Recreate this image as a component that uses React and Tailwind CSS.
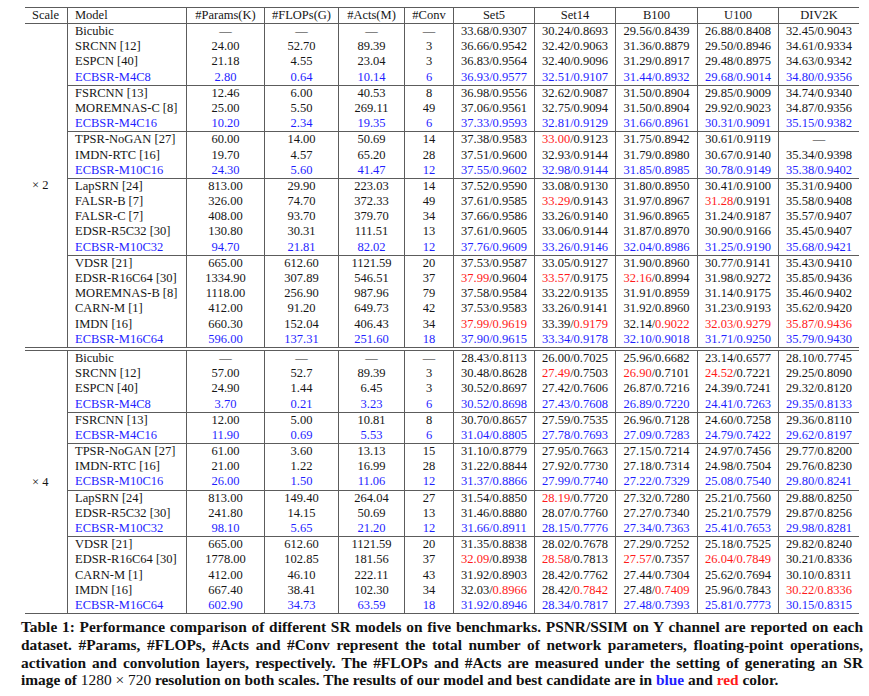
import React from 'react'

const W = ['w-[119px]', 'w-[78px]', 'w-[74px]', 'w-[66px]', 'w-[49px]', 'w-[81px]', 'w-[81px]', 'w-[82px]', 'w-[81px]', 'w-[81px]']
const HEAD = ['Model', '#Params(K)', '#FLOPs(G)', '#Acts(M)', '#Conv', 'Set5', 'Set14', 'B100', 'U100', 'DIV2K']
const D = '—'

// a trailing * marks a value printed in red; rows whose name starts with ECBSR are ours (blue)
const X2 = [
  [
    ['Bicubic', D, D, D, D, '33.68/0.9307', '30.24/0.8693', '29.56/0.8439', '26.88/0.8408', '32.45/0.9043'],
    ['SRCNN [12]', '24.00', '52.70', '89.39', '3', '36.66/0.9542', '32.42/0.9063', '31.36/0.8879', '29.50/0.8946', '34.61/0.9334'],
    ['ESPCN [40]', '21.18', '4.55', '23.04', '3', '36.83/0.9564', '32.40/0.9096', '31.29/0.8917', '29.48/0.8975', '34.63/0.9342'],
    ['ECBSR-M4C8', '2.80', '0.64', '10.14', '6', '36.93/0.9577', '32.51/0.9107', '31.44/0.8932', '29.68/0.9014', '34.80/0.9356'],
  ],
  [
    ['FSRCNN [13]', '12.46', '6.00', '40.53', '8', '36.98/0.9556', '32.62/0.9087', '31.50/0.8904', '29.85/0.9009', '34.74/0.9340'],
    ['MOREMNAS-C [8]', '25.00', '5.50', '269.11', '49', '37.06/0.9561', '32.75/0.9094', '31.50/0.8904', '29.92/0.9023', '34.87/0.9356'],
    ['ECBSR-M4C16', '10.20', '2.34', '19.35', '6', '37.33/0.9593', '32.81/0.9129', '31.66/0.8961', '30.31/0.9091', '35.15/0.9382'],
  ],
  [
    ['TPSR-NoGAN [27]', '60.00', '14.00', '50.69', '14', '37.38/0.9583', '33.00*/0.9123', '31.75/0.8942', '30.61/0.9119', D],
    ['IMDN-RTC [16]', '19.70', '4.57', '65.20', '28', '37.51/0.9600', '32.93/0.9144', '31.79/0.8980', '30.67/0.9140', '35.34/0.9398'],
    ['ECBSR-M10C16', '24.30', '5.60', '41.47', '12', '37.55/0.9602', '32.98/0.9144', '31.85/0.8985', '30.78/0.9149', '35.38/0.9402'],
  ],
  [
    ['LapSRN [24]', '813.00', '29.90', '223.03', '14', '37.52/0.9590', '33.08/0.9130', '31.80/0.8950', '30.41/0.9100', '35.31/0.9400'],
    ['FALSR-B [7]', '326.00', '74.70', '372.33', '49', '37.61/0.9585', '33.29*/0.9143', '31.97/0.8967', '31.28*/0.9191', '35.58/0.9408'],
    ['FALSR-C [7]', '408.00', '93.70', '379.70', '34', '37.66/0.9586', '33.26/0.9140', '31.96/0.8965', '31.24/0.9187', '35.57/0.9407'],
    ['EDSR-R5C32 [30]', '130.80', '30.31', '111.51', '13', '37.61/0.9605', '33.06/0.9144', '31.87/0.8970', '30.90/0.9166', '35.45/0.9407'],
    ['ECBSR-M10C32', '94.70', '21.81', '82.02', '12', '37.76/0.9609', '33.26/0.9146', '32.04/0.8986', '31.25/0.9190', '35.68/0.9421'],
  ],
  [
    ['VDSR [21]', '665.00', '612.60', '1121.59', '20', '37.53/0.9587', '33.05/0.9127', '31.90/0.8960', '30.77/0.9141', '35.43/0.9410'],
    ['EDSR-R16C64 [30]', '1334.90', '307.89', '546.51', '37', '37.99*/0.9604', '33.57*/0.9175', '32.16*/0.8994', '31.98/0.9272', '35.85/0.9436'],
    ['MOREMNAS-B [8]', '1118.00', '256.90', '987.96', '79', '37.58/0.9584', '33.22/0.9135', '31.91/0.8959', '31.14/0.9175', '35.46/0.9402'],
    ['CARN-M [1]', '412.00', '91.20', '649.73', '42', '37.53/0.9583', '33.26/0.9141', '31.92/0.8960', '31.23/0.9193', '35.62/0.9420'],
    ['IMDN [16]', '660.30', '152.04', '406.43', '34', '37.99*/0.9619*', '33.39/0.9179*', '32.14/0.9022*', '32.03*/0.9279*', '35.87*/0.9436*'],
    ['ECBSR-M16C64', '596.00', '137.31', '251.60', '18', '37.90/0.9615', '33.34/0.9178', '32.10/0.9018', '31.71/0.9250', '35.79/0.9430'],
  ],
]

const X4 = [
  [
    ['Bicubic', D, D, D, D, '28.43/0.8113', '26.00/0.7025', '25.96/0.6682', '23.14/0.6577', '28.10/0.7745'],
    ['SRCNN [12]', '57.00', '52.7', '89.39', '3', '30.48/0.8628', '27.49*/0.7503', '26.90*/0.7101', '24.52*/0.7221', '29.25/0.8090'],
    ['ESPCN [40]', '24.90', '1.44', '6.45', '3', '30.52/0.8697', '27.42/0.7606', '26.87/0.7216', '24.39/0.7241', '29.32/0.8120'],
    ['ECBSR-M4C8', '3.70', '0.21', '3.23', '6', '30.52/0.8698', '27.43/0.7608', '26.89/0.7220', '24.41/0.7263', '29.35/0.8133'],
  ],
  [
    ['FSRCNN [13]', '12.00', '5.00', '10.81', '8', '30.70/0.8657', '27.59/0.7535', '26.96/0.7128', '24.60/0.7258', '29.36/0.8110'],
    ['ECBSR-M4C16', '11.90', '0.69', '5.53', '6', '31.04/0.8805', '27.78/0.7693', '27.09/0.7283', '24.79/0.7422', '29.62/0.8197'],
  ],
  [
    ['TPSR-NoGAN [27]', '61.00', '3.60', '13.13', '15', '31.10/0.8779', '27.95/0.7663', '27.15/0.7214', '24.97/0.7456', '29.77/0.8200'],
    ['IMDN-RTC [16]', '21.00', '1.22', '16.99', '28', '31.22/0.8844', '27.92/0.7730', '27.18/0.7314', '24.98/0.7504', '29.76/0.8230'],
    ['ECBSR-M10C16', '26.00', '1.50', '11.06', '12', '31.37/0.8866', '27.99/0.7740', '27.22/0.7329', '25.08/0.7540', '29.80/0.8241'],
  ],
  [
    ['LapSRN [24]', '813.00', '149.40', '264.04', '27', '31.54/0.8850', '28.19*/0.7720', '27.32/0.7280', '25.21/0.7560', '29.88/0.8250'],
    ['EDSR-R5C32 [30]', '241.80', '14.15', '50.69', '13', '31.46/0.8880', '28.07/0.7760', '27.27/0.7340', '25.21/0.7579', '29.87/0.8256'],
    ['ECBSR-M10C32', '98.10', '5.65', '21.20', '12', '31.66/0.8911', '28.15/0.7776', '27.34/0.7363', '25.41/0.7653', '29.98/0.8281'],
  ],
  [
    ['VDSR [21]', '665.00', '612.60', '1121.59', '20', '31.35/0.8838', '28.02/0.7678', '27.29/0.7252', '25.18/0.7525', '29.82/0.8240'],
    ['EDSR-R16C64 [30]', '1778.00', '102.85', '181.56', '37', '32.09*/0.8938', '28.58*/0.7813', '27.57*/0.7357', '26.04*/0.7849*', '30.21/0.8336'],
    ['CARN-M [1]', '412.00', '46.10', '222.11', '43', '31.92/0.8903', '28.42/0.7762', '27.44/0.7304', '25.62/0.7694', '30.10/0.8311'],
    ['IMDN [16]', '667.40', '38.41', '102.30', '34', '32.03/0.8966*', '28.42/0.7842*', '27.48/0.7409*', '25.96/0.7843', '30.22*/0.8336*'],
    ['ECBSR-M16C64', '602.90', '34.73', '63.59', '18', '31.92/0.8946', '28.34/0.7817', '27.48/0.7393', '25.81/0.7773', '30.15/0.8315'],
  ],
]

function Score({ v }) {
  if (!v.includes('/')) return v
  const [a, b] = v.split('/')
  const ra = a.endsWith('*')
  const rb = b.endsWith('*')
  return (
    <>
      <span className={ra ? 'text-[#ff1a1a]' : ''}>{a.replace('*', '')}</span>
      <span className={ra && rb ? 'text-[#ff1a1a]' : ''}>/</span>
      <span className={rb ? 'text-[#ff1a1a]' : ''}>{b.replace('*', '')}</span>
    </>
  )
}

function Row({ cells }) {
  const ours = cells[0].startsWith('ECBSR')
  return (
    <div className={`flex h-[15.2px] leading-[15.2px] ${ours ? 'text-[#1f1fff]' : ''}`}>
      {cells.map((c, i) => (
        <div
          key={i}
          className={`${W[i]} shrink-0 border-l border-[#5c5c5c] whitespace-nowrap ${i === 0 ? 'pl-[7px]' : 'text-center'}`}
        >
          <Score v={c} />
        </div>
      ))}
    </div>
  )
}

function Section({ label, groups, className }) {
  return (
    <div className={`flex ${className}`}>
      <div className="w-[42px] shrink-0 flex items-center pl-[7px]">{label}</div>
      <div className="flex flex-col">
        {groups.map((g, gi) => (
          <div key={gi} className={gi > 0 ? 'border-t border-[#5c5c5c]' : ''}>
            {g.map((r, ri) => <Row key={ri} cells={r} />)}
          </div>
        ))}
      </div>
    </div>
  )
}

export default function App() {
  return (
    <div className="w-[869px] h-[696px] bg-white text-[#161616] font-['Liberation_Serif',serif] overflow-hidden">
      <div className="pt-[7px] pl-[25px]">
        <div className="w-[834px] text-[12.5px]">
          {/* header */}
          <div className="flex h-[17px] leading-[15px] border-t border-b border-[#5c5c5c]">
            <div className="w-[42px] shrink-0 pl-[7px]">Scale</div>
            {HEAD.map((h, i) => (
              <div key={h} className={`${W[i]} shrink-0 border-l border-[#5c5c5c] ${i === 0 ? 'pl-[7px]' : 'text-center'}`}>{h}</div>
            ))}
          </div>
          <Section label="× 2" groups={X2} className="border-b border-[#5c5c5c]" />
          <Section label="× 4" groups={X4} className="mt-[2px] border-t border-b border-[#5c5c5c]" />
        </div>
      </div>

      <div className="ml-[21px] mt-[4px] w-[842px] font-bold text-[15.4px] leading-[17.7px] text-[#111]">
        <div className="text-justify [text-align-last:justify]">
          Table 1: Performance comparison of different SR models on five benchmarks. PSNR/SSIM on Y channel are reported on each
        </div>
        <div className="text-justify [text-align-last:justify]">
          dataset. #Params, #FLOPs, #Acts and #Conv represent the total number of network parameters, floating-point operations,
        </div>
        <div className="text-justify [text-align-last:justify]">
          activation and convolution layers, respectively. The #FLOPs and #Acts are measured under the setting of generating an SR
        </div>
        <div>
          image of <span className="font-normal">1280 × 720</span> resolution on both scales. The results of our model and best candidate are in{' '}
          <span className="text-[#1f1fff]">blue</span> and <span className="text-[#ff1a1a]">red</span> color.
        </div>
      </div>
    </div>
  )
}
